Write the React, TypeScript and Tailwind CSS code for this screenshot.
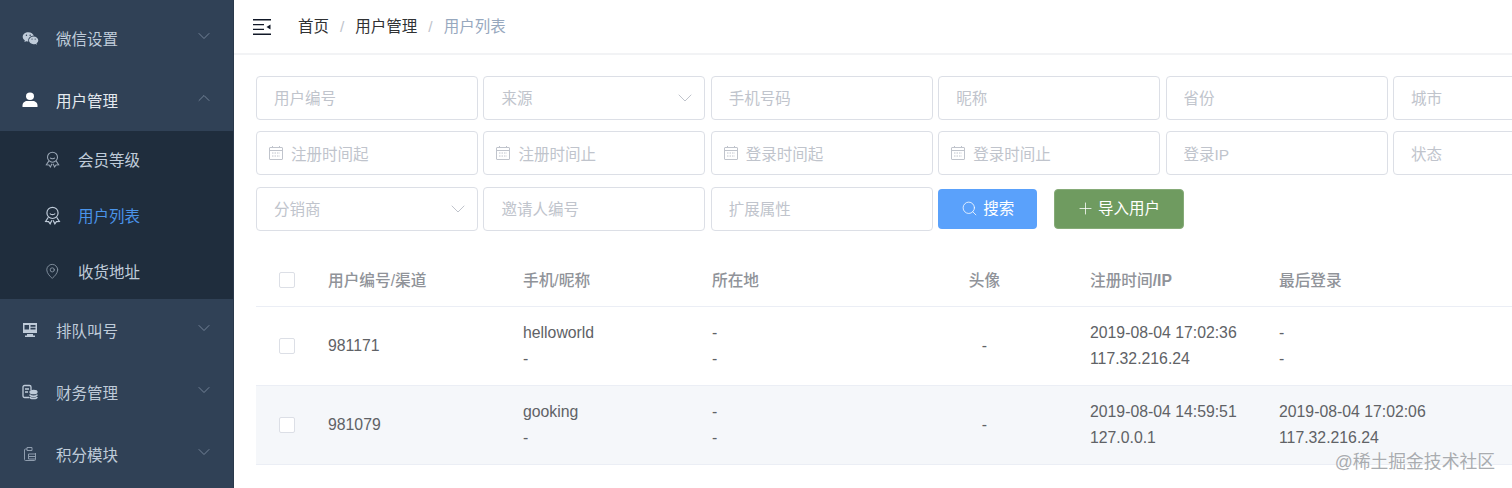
import { ChevronDown, ChevronUp, MapPin, Plus, Search } from 'lucide-react';
import { RiWechatFill } from 'react-icons/ri';

const font = { fontFamily: '"Liberation Sans", "Noto Sans CJK SC", sans-serif' };

function UserIcon() {
  return (
    <svg viewBox="0 0 16 16" className="h-4 w-4" fill="currentColor">
      <ellipse cx="8" cy="4.2" rx="4" ry="3.7" />
      <path d="M0.5 15v-1.6C0.5 10.6 3 9 5 9h6c2 0 4.5 1.6 4.5 4.4V15z" />
    </svg>
  );
}

function BadgeIcon({ size }: { size: string }) {
  return (
    <svg viewBox="0 0 16 16" className={`${size} shrink-0`} fill="none" stroke="currentColor" strokeWidth="1">
      <circle cx="8" cy="5.8" r="4.7" />
      <path d="M5.8 6.3c.8 1.3 3.600 1.300 4.400 0" />
      <path d="M4.500 9.500 2.200 13l2.500.2L6 15l1.500-3M11.500 9.500l2.300 3.500-2.500.2L10 15l-1.500-3" />
    </svg>
  );
}

function ScreenIcon() {
  return (
    <svg viewBox="0 0 16 16" className="h-4 w-4" fill="currentColor">
      <path d="M1 1h14v10H1zM2.500 3v4.500H7V3zM8.500 3v1.800h5V3zM8.500 5.800v1.700h5V5.800z" fillRule="evenodd" />
      <path d="M5 12h6v1.500h2V15H3v-1.500h2z" />
    </svg>
  );
}

function CoinsIcon() {
  return (
    <svg viewBox="0 0 16 16" className="h-4 w-4" fill="none" stroke="currentColor" strokeWidth="1.3">
      <path d="M7 13.500H2.500a1.500 1.500 0 0 1-1.500-1.500V3a1.500 1.500 0 0 1 1.500-1.500h5A1.500 1.500 0 0 1 9 3v3" />
      <path d="M3 5h4M3 8h3" />
      <ellipse cx="11.500" cy="8" rx="3.500" ry="1.700" fill="currentColor" />
      <path d="M8 10.500c0 2.500 7 2.500 7 0M8 13c0 2 7 2 7 0" strokeWidth="1.600" />
    </svg>
  );
}

function ClipIcon() {
  return (
    <svg viewBox="0 0 16 16" className="h-4 w-4 text-[#8f9dae]" fill="none" stroke="currentColor" strokeWidth="1">
      <path d="M5 3H3.500A1 1 0 0 0 2.500 4v9.500a1 1 0 0 0 1 1h9a1 1 0 0 0 1-1V7" />
      <path d="M5 1.500h5V4.500H5z" />
      <path d="M6.500 8h7v5h-7zM6.500 10.500h7" />
    </svg>
  );
}

function CalendarIcon() {
  return (
    <svg viewBox="0 0 14 14" className="h-[14px] w-[14px] shrink-0" fill="none" stroke="currentColor" strokeWidth="1">
      <rect x="0.500" y="1.500" width="13" height="12" rx="0.500" />
      <path d="M0.500 4.500h13M3.500 0v2M10.500 0v2" />
      <path d="M3 7h8M3 10h8" strokeDasharray="1.500 1" />
    </svg>
  );
}

function HamburgerIcon() {
  return (
    <svg viewBox="0 0 18 16" className="h-4 w-[18px]" fill="#111827">
      <path d="M0 0h18v1.500H0zM0 14.500h18V16H0zM0 5h11v1.200H0zM0 9.800h11V11H0z" />
      <path d="M17.500 5.500v5L13.500 8z" />
    </svg>
  );
}

function MenuRow({ icon, label, open, bright }: { icon: React.ReactNode; label: string; open?: boolean; bright?: boolean }) {
  return (
    <div className="flex h-[62px] items-center pl-[22px] pr-[19px]">
      <span className={`flex w-[34px] ${bright ? 'text-white' : 'text-[#bfcbd9]'}`}>{icon}</span>
      <span className={`flex-1 pt-[3px] text-[15.5px] ${bright ? 'text-[#e4e9ef]' : 'text-[#bfcbd9]'}`}>{label}</span>
      {open ? (
        <ChevronUp className="mb-1 h-5 w-5 text-[#7f8fa3]" strokeWidth={1} />
      ) : (
        <ChevronDown className="mb-1 h-5 w-5 text-[#7f8fa3]" strokeWidth={1} />
      )}
    </div>
  );
}

function SubRow({ icon, label, active }: { icon: React.ReactNode; label: string; active?: boolean }) {
  return (
    <div className={`flex h-[56px] items-center pl-[45px] ${active ? 'text-[#4a94ea]' : 'text-[#bfcbd9]'}`}>
      <span className={`mr-[19px] flex w-[14px] justify-center ${active ? 'text-[#bfcbd9]' : 'text-[#9aa7b6]'}`}>{icon}</span>
      <span className="pt-[3px] text-[15.5px]">{label}</span>
    </div>
  );
}

function Field({ text, kind }: { text: string; kind?: 'select' | 'date' }) {
  return (
    <div className="flex h-11 w-[222px] shrink-0 items-center rounded-[4px] border border-[#dcdfe6] bg-white text-[#c0c4cc]">
      {kind === 'date' && (
        <span className="ml-3 mr-2 flex">
          <CalendarIcon />
        </span>
      )}
      <input
        readOnly
        placeholder={text}
        className={`min-w-0 flex-1 bg-transparent pt-[2px] text-[15.5px] outline-none placeholder:text-[#c0c4cc] ${kind === 'date' ? '' : 'pl-[17px]'}`}
      />
      {kind === 'select' && <ChevronDown className="mr-[7px] h-6 w-6 text-[#c0c4cc]" strokeWidth={1} />}
    </div>
  );
}

function Check() {
  return <span className="block h-4 w-4 rounded-[2px] border border-[#dcdfe6] bg-white" />;
}

const gridCols = 'grid grid-cols-[60px_195px_189px_189px_189px_189px_1fr] items-center';

function Row({ id, name, place, time, ip, lastTime, lastIp, gray }: { id: string; name: string; place: string; time: string; ip: string; lastTime: string; lastIp: string; gray?: boolean }) {
  return (
    <div className={`${gridCols} h-[79px] border-b border-[#ebeef5] text-[15.8px] text-[#606266] ${gray ? 'bg-[#f5f7fa]' : ''}`}>
      <div className="pl-[23px]">
        <Check />
      </div>
      <div className="pl-3">{id}</div>
      <div className="pl-3 leading-[26px]">
        <div>{name}</div>
        <div>-</div>
      </div>
      <div className="pl-3 leading-[26px]">
        <div>{place}</div>
        <div>-</div>
      </div>
      <div className="pl-[2px] text-center">-</div>
      <div className="pl-3 leading-[26px] whitespace-nowrap">
        <div>{time}</div>
        <div>{ip}</div>
      </div>
      <div className="pl-3 leading-[26px] whitespace-nowrap">
        <div>{lastTime}</div>
        <div>{lastIp}</div>
      </div>
    </div>
  );
}

export default function App() {
  return (
    <div className="relative flex h-[488px] w-[1512px] overflow-hidden bg-white" style={font}>
      <aside className="w-[234px] shrink-0 overflow-hidden border-r border-[#2a394b] bg-[#304156] pt-[7px]">
        <MenuRow icon={<RiWechatFill className="h-[17px] w-[17px]" />} label="微信设置" />
        <MenuRow icon={<UserIcon />} label="用户管理" open bright />
        <div className="bg-[#1f2d3d]">
          <SubRow icon={<BadgeIcon size="h-[17px] w-[17px]" />} label="会员等级" />
          <SubRow icon={<BadgeIcon size="h-[19px] w-[19px]" />} label="用户列表" active />
          <SubRow icon={<MapPin className="h-[16.5px] w-[16.5px] shrink-0" strokeWidth={1.1} />} label="收货地址" />
        </div>
        <MenuRow icon={<ScreenIcon />} label="排队叫号" />
        <MenuRow icon={<CoinsIcon />} label="财务管理" />
        <MenuRow icon={<ClipIcon />} label="积分模块" />
      </aside>

      <main className="min-w-0 flex-1">
        <header className="flex h-[55px] items-center border-b-2 border-[#f2f3f5] pl-[19px] text-[15.5px]">
          <HamburgerIcon />
          <nav className="ml-[27px] flex items-center">
            <span className="text-[#303133]">首页</span>
            <span className="mx-[11px] text-[#c0c4cc]">/</span>
            <span className="text-[#303133]">用户管理</span>
            <span className="mx-[11px] text-[#c0c4cc]">/</span>
            <span className="text-[#97a8be]">用户列表</span>
          </nav>
        </header>

        <section className="flex flex-col gap-[11.4px] pl-[22px] pt-[21px]">
          <div className="flex gap-[5.4px]">
            <Field text="用户编号" />
            <Field text="来源" kind="select" />
            <Field text="手机号码" />
            <Field text="昵称" />
            <Field text="省份" />
            <Field text="城市" />
          </div>
          <div className="flex gap-[5.4px]">
            <Field text="注册时间起" kind="date" />
            <Field text="注册时间止" kind="date" />
            <Field text="登录时间起" kind="date" />
            <Field text="登录时间止" kind="date" />
            <Field text="登录IP" />
            <Field text="状态" />
          </div>
          <div className="flex items-center gap-[5.4px]">
            <Field text="分销商" kind="select" />
            <Field text="邀请人编号" />
            <Field text="扩展属性" />
            <button className="flex h-10 w-[99px] items-center justify-center gap-[5px] rounded-[4px] bg-[#5aa1fb] text-[15.5px] text-white">
              <Search className="h-[17px] w-[17px]" strokeWidth={1.1} />
              搜索
            </button>
            <button className="ml-[11.5px] flex h-10 w-[130px] items-center justify-center gap-[3px] rounded-[4px] border border-[#86ab78] bg-[#6f9b60] pr-[2px] text-[15.5px] text-white">
              <Plus className="h-[19px] w-[19px]" strokeWidth={1} />
              导入用户
            </button>
          </div>
        </section>

        <section className="ml-[22px] mt-[24px]">
          <div className={`${gridCols} h-[52px] border-b border-[#ebeef5] text-[15.7px] font-medium text-[#909399]`}>
            <div className="pl-[23px]">
              <Check />
            </div>
            <div className="pl-3">用户编号/渠道</div>
            <div className="pl-3">手机/昵称</div>
            <div className="pl-3">所在地</div>
            <div className="pl-[2px] text-center">头像</div>
            <div className="pl-3">
              注册时间<span className="font-bold">/IP</span>
            </div>
            <div className="pl-3">最后登录</div>
          </div>
          <Row id="981171" name="helloworld" place="-" time="2019-08-04 17:02:36" ip="117.32.216.24" lastTime="-" lastIp="-" />
          <Row id="981079" name="gooking" place="-" time="2019-08-04 14:59:51" ip="127.0.0.1" lastTime="2019-08-04 17:02:06" lastIp="117.32.216.24" gray />
        </section>
      </main>

      {/* site watermark over the corner */}
      <span className="absolute bottom-[14px] right-[17px] text-[17.8px] leading-[24px] text-[#a9acb0] [text-shadow:0_0_2px_#fff]">@稀土掘金技术社区</span>
    </div>
  );
}
